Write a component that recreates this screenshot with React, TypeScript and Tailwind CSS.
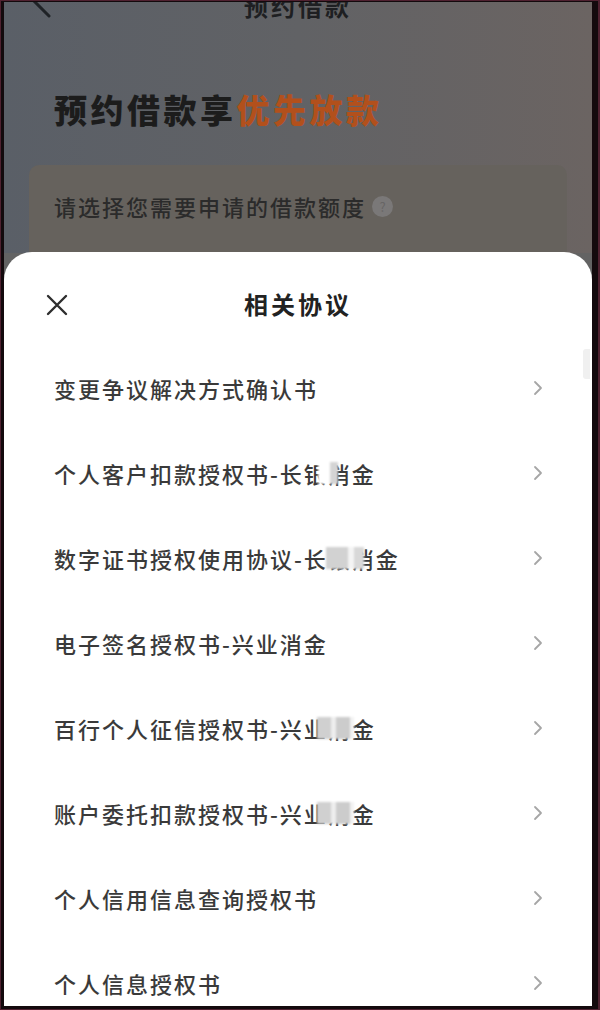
import React from 'react';

type Cover = { left: number; blocks: { w: number; c: string }[] };

type Agreement = {
  id: number;
  title: string;
  cover?: Cover;
};

const agreements: Agreement[] = [
  { id: 1, title: '变更争议解决方式确认书' },
  {
    id: 2,
    title: '个人客户扣款授权书-长银消金',
    cover: { left: 264, blocks: [{ w: 12, c: 'bg-white' }, { w: 8, c: 'bg-[#d4d4d4]' }] },
  },
  {
    id: 3,
    title: '数字证书授权使用协议-长银消金',
    cover: {
      left: 272,
      blocks: [
        { w: 22, c: 'bg-[#d2d2d2]' },
        { w: 6, c: 'bg-[#f4f4f4]' },
        { w: 10, c: 'bg-[#d8d8d8]' },
      ],
    },
  },
  { id: 4, title: '电子签名授权书-兴业消金' },
  {
    id: 5,
    title: '百行个人征信授权书-兴业消金',
    cover: {
      left: 263,
      blocks: [
        { w: 14, c: 'bg-[#d0d0d0]' },
        { w: 5, c: 'bg-[#eeeeee]' },
        { w: 14, c: 'bg-[#cccccc]' },
        { w: 4, c: 'bg-[#f2f2f2]' },
      ],
    },
  },
  {
    id: 6,
    title: '账户委托扣款授权书-兴业消金',
    cover: {
      left: 263,
      blocks: [
        { w: 14, c: 'bg-[#d0d0d0]' },
        { w: 5, c: 'bg-[#eeeeee]' },
        { w: 14, c: 'bg-[#cccccc]' },
        { w: 4, c: 'bg-[#f2f2f2]' },
      ],
    },
  },
  { id: 7, title: '个人信用信息查询授权书' },
  { id: 8, title: '个人信息授权书' },
];

function ChevronRight() {
  return (
    <svg width="10" height="16" viewBox="0 0 10 16" fill="none">
      <path d="M2 2l6 6-6 6" stroke="#a6a6a6" strokeWidth="1.8" strokeLinecap="round" strokeLinejoin="round" />
    </svg>
  );
}

function CloseIcon() {
  return (
    <svg width="22" height="22" viewBox="0 0 22 22" fill="none">
      <path d="M2 2l18 18M20 2L2 20" stroke="#2e2e2e" strokeWidth="2.4" strokeLinecap="round" />
    </svg>
  );
}

function AgreementRow({ item }: { item: Agreement }) {
  return (
    <div className="flex h-[85px] items-center justify-between pl-[50px] pr-[49px]">
      <span className="relative text-[22px] leading-[30px] font-medium tracking-[2px] text-[#3a3a3a]">
        {item.title}
        {item.cover && (
          <span
            className="absolute top-[4px] flex h-[22px] blur-[1px]"
            style={{ left: item.cover.left }}
          >
            {item.cover.blocks.map((b, i) => (
              <span key={i} className={`h-full ${b.c}`} style={{ width: b.w }} />
            ))}
          </span>
        )}
      </span>
      <ChevronRight />
    </div>
  );
}

export default function App() {
  return (
    <div className="h-[1010px] w-[600px] bg-[#4f2130] pt-[1px] pb-[1px] pl-[1px] pr-[2px]">
      <div className="h-full w-full bg-[#130a0d] pt-[1px] pb-[3px] pl-[3px] pr-[6px] font-['Noto_Sans_CJK_SC',sans-serif]">
        <div className="relative flex h-full flex-col overflow-hidden bg-[#636363]">
          {/* dimmed page behind the sheet */}
          <div className="relative h-[251px] shrink-0 bg-gradient-to-r from-[#5a5f67] via-[#616265] to-[#6b6462]">
            <div className="relative -mt-[16px] flex h-[40px] items-center justify-center">
              <svg className="absolute left-[25px] top-[-4px]" width="24" height="36" viewBox="0 0 24 36" fill="none">
                <path d="M20 2L4 18l16 16" stroke="#1f2226" strokeWidth="3" strokeLinecap="round" strokeLinejoin="round" />
              </svg>
              <span className="text-[24px] font-bold tracking-[3px] text-[#1e1f22]">预约借款</span>
            </div>
            <h1 className="mt-[61px] pl-[50px] text-[33px] leading-[44px] font-black tracking-[3.5px] text-[#1c1c1c]">
              预约借款享<span className="text-[#b2501c]">优先放款</span>
            </h1>
            <div className="mx-[25px] mt-[34px] h-[100px] rounded-[10px] bg-[#66625d] pt-[26px] pl-[25px]">
              <div className="flex items-center">
                <span className="text-[22px] leading-[30px] font-medium tracking-[2px] text-[#2b2b2b]">请选择您需要申请的借款额度</span>
                <span className="ml-[6px] flex h-[21px] w-[21px] items-center justify-center rounded-full bg-[#7a7878] text-[13px] leading-none text-[#676565]">
                  ?
                </span>
              </div>
            </div>
          </div>

          {/* agreements sheet */}
          <div className="relative -mt-[1px] flex-1 rounded-t-[28px] bg-white">
            <div className="relative flex h-[93px] items-center justify-center pt-[10px]">
              <span className="absolute left-[42px] top-[42px]">
                <CloseIcon />
              </span>
              <span className="text-[24px] font-bold tracking-[3px] text-[#222222]">相关协议</span>
            </div>
            <div className="absolute right-[2px] top-[97px] h-[30px] w-[7px] rounded-l-[3px] bg-[#f0f0f0]" />
            <div className="flex flex-col">
              {agreements.map((item) => (
                <AgreementRow key={item.id} item={item} />
              ))}
            </div>
            <div className="absolute bottom-0 left-0 right-0 h-[16px] bg-gradient-to-b from-white/0 to-[#ececec]" />
          </div>
        </div>
      </div>
    </div>
  );
}
